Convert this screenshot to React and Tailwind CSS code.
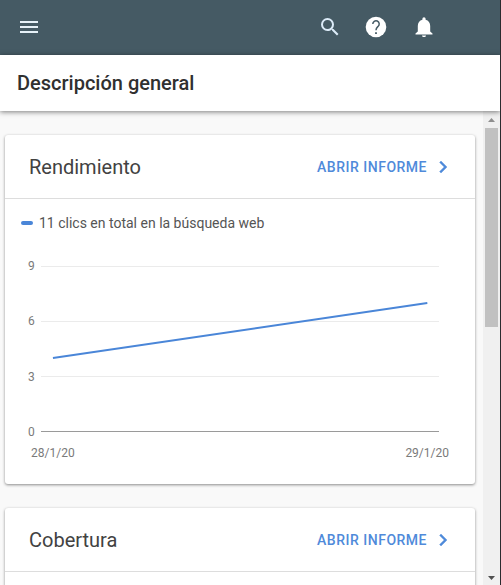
const GRID_LINES = [8.5, 63.5, 118.5];

function ReportCard({ title, children }) {
  return (
    <section className="shrink-0 rounded-[3px] bg-white shadow-[0_1px_3px_rgba(0,0,0,0.45)]">
      <header className="flex h-16 items-center justify-between border-b border-[#dddddd] pl-6 pr-5">
        <h2 className="text-xl text-[#424242]">{title}</h2>
        <a href="#informe" className="flex items-center gap-1 text-sm font-medium tracking-[0.5px] text-[#4f8ada]">
          ABRIR INFORME
          <svg className="size-6" viewBox="0 0 24 24" fill="currentColor" aria-hidden="true">
            <path d="M10 6 8.59 7.41 13.17 12l-4.58 4.59L10 18l6-6z" stroke="currentColor" strokeWidth="0.4" />
          </svg>
        </a>
      </header>
      {children}
    </section>
  );
}

function ClicksChart() {
  return (
    <div className="pb-[18px]">
      <p className="flex items-center gap-1.5 px-4 py-3 text-sm leading-6 text-[#555555]">
        <span className="h-1 w-3 rounded-full bg-[#4a86d8]" />
        11 clics en total en la búsqueda web
      </p>
      <div className="flex gap-1.5 pl-[23px] pr-9 pt-[11px]">
        <div className="flex flex-col justify-between text-xs text-[#7a7a7a]">
          <span>9</span>
          <span>6</span>
          <span>3</span>
          <span>0</span>
        </div>
        <svg className="h-[182px] min-w-0 flex-1" role="img" aria-label="Clics: 4 el 28/1/20, 7 el 29/1/20">
          {GRID_LINES.map((y) => (
            <line key={y} x1="0" x2="100%" y1={y} y2={y} stroke="#ebebeb" />
          ))}
          <line x1="0" x2="100%" y1="173.5" y2="173.5" stroke="#9a9a9a" />
          <line x1="3%" x2="97%" y1="100" y2="45" stroke="#4a86d8" strokeWidth="2" />
        </svg>
      </div>
      <div className="flex justify-between px-[26px] text-xs leading-[26px] text-[#7a7a7a]">
        <span>28/1/20</span>
        <span>29/1/20</span>
      </div>
    </div>
  );
}

function Scrollbar() {
  return (
    <div className="flex w-[17px] shrink-0 flex-col items-center bg-[#f0f0f0]" aria-hidden="true">
      <svg className="h-[17px] w-[17px] shrink-0" viewBox="0 0 17 17">
        <path d="M5 11h7L8.500 7z" fill="#8f8f8f" />
      </svg>
      <div className="h-[199px] w-[13px] bg-[#c1c1c1]" />
      <div className="flex-1" />
      <svg className="h-[17px] w-[17px] shrink-0" viewBox="0 0 17 17">
        <path d="M5 8h7l-3.500 4z" fill="#505050" />
      </svg>
    </div>
  );
}

export default function App() {
  return (
    <div className="flex h-screen flex-col overflow-hidden border-r border-[#2b2b2f] bg-[#f9f9f9] font-[Roboto,sans-serif]">
      <header className="flex h-[55px] shrink-0 items-center justify-between bg-[#455a64] pb-px pl-[17px] pr-16 text-white">
        <button type="button" aria-label="Menú" className="text-[#e6f1f8]">
          <svg className="size-6" viewBox="0 0 24 24" fill="currentColor">
            <path d="M3 18h18v-2H3v2zm0-5h18v-2H3v2zm0-7v2h18V6H3z" />
          </svg>
        </button>
        <div className="flex items-center">
          <button type="button" aria-label="Buscar" className="mr-[22px] text-[#dcebf8]">
            <svg className="size-6" viewBox="0 0 24 24" fill="currentColor">
              <path d="M15.500 14h-.79l-.28-.27A6.470 6.470 0 0 0 16 9.500 6.500 6.500 0 1 0 9.500 16c1.610 0 3.090-.59 4.230-1.570l.27.28v.79l5 4.990L20.490 19l-4.990-5zm-6 0C7.010 14 5 11.990 5 9.500S7.010 5 9.500 5 14 7.010 14 9.500 11.990 14 9.500 14z" />
            </svg>
          </button>
          <button type="button" aria-label="Ayuda" className="mr-6">
            <svg className="size-6" viewBox="0 0 24 24" fill="none">
              <circle cx="12" cy="12" r="10.300" fill="#ffffff" />
              <path d="M8.800 9a3.200 3.200 0 1 1 5.400 2.300C13 12.400 12 13 12 15.200" stroke="#455a64" strokeWidth="1.500" />
              <path d="M11.100 17.200h1.800v1.800h-1.800z" fill="#455a64" />
            </svg>
          </button>
          <button type="button" aria-label="Notificaciones">
            <svg className="size-6" viewBox="0 0 24 24" fill="currentColor">
              <path d="M12 22c1.100 0 2-.7 2-1.600h-4c0 .9.900 1.600 2 1.600zM18.200 16.500V11c0-3.200-1.700-5.600-4.600-6.300v-.9a1.600 1.600 0 0 0-3.200 0v.9C7.500 5.400 5.800 7.800 5.800 11v5.500L3.500 18.600v1h17v-1z" />
            </svg>
          </button>
        </div>
      </header>
      <div className="z-10 flex h-14 shrink-0 items-center bg-white px-[17px] shadow-[0_1px_5px_rgba(0,0,0,0.5)]">
        <h1 className="text-xl font-medium text-[#303030]">Descripción general</h1>
      </div>
      <div className="flex min-h-0 flex-1">
        <main className="flex min-w-0 flex-1 flex-col gap-6 overflow-hidden pl-[5px] pr-2 pt-6">
          <ReportCard title="Rendimiento">
            <ClicksChart />
          </ReportCard>
          <ReportCard title="Cobertura">
            <div className="h-60" />
          </ReportCard>
        </main>
        <Scrollbar />
      </div>
    </div>
  );
}
